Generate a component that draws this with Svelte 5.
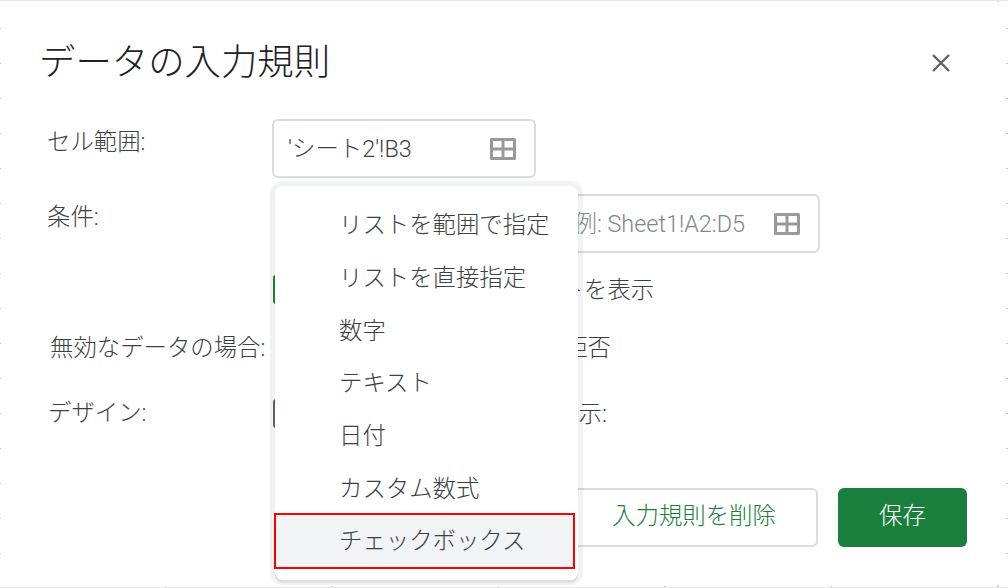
<script>
	const menuItems = [
		'リストを範囲で指定',
		'リストを直接指定',
		'数字',
		'テキスト',
		'日付',
		'カスタム数式',
		'チェックボックス'
	];
</script>

{#snippet gridIcon()}
	<svg class="grid-icon" viewBox="0 0 26 22" width="26" height="22" aria-hidden="true">
		<path fill="#999" fill-rule="evenodd" d="M1.500 0h23A1.500 1.500 0 0 1 26 1.500v19a1.500 1.500 0 0 1-1.500 1.500h-23A1.500 1.500 0 0 1 0 20.500v-19A1.500 1.500 0 0 1 1.500 0zM3 3v6.500h8.500V3zm11.500 0v6.500H23V3zM3 12.500V19h8.500v-6.500zm11.500 0V19H23v-6.500z" />
	</svg>
{/snippet}

<div class="page">
	<div class="dialog">
		<header>
			<h1>データの入力規則</h1>
			<button class="close" aria-label="閉じる">
				<svg viewBox="0 0 18 18" width="18" height="18">
					<path d="M1 1l16 16M17 1L1 17" stroke="#5f6368" stroke-width="2.400" fill="none" />
				</svg>
			</button>
		</header>

		<div class="form">
			<div class="row row-range">
				<div class="label">セル範囲:</div>
				<div class="input">
					<span class="value">'シート2'!B3</span>
					{@render gridIcon()}
				</div>
			</div>

			<div class="row row-criteria">
				<div class="label">条件:</div>
				<div class="criteria-input">
					<div class="input">
						<span class="value placeholder">例: Sheet1!A2:D5</span>
						{@render gridIcon()}
					</div>
				</div>
			</div>

			<div class="row row-check">
				<div class="label"></div>
				<span class="checkbox checked"></span>
				<span class="text">セルにプルダウン リストを表示</span>
			</div>

			<div class="row row-invalid">
				<div class="label">無効なデータの場合:</div>
				<span class="text reject">入力を拒否</span>
			</div>

			<div class="row row-design">
				<div class="label">デザイン:</div>
				<span class="checkbox"></span>
				<span class="text">検証ヘルプテキストを表示:</span>
			</div>
		</div>

		<footer>
			<button class="btn delete">入力規則を削除</button>
			<button class="btn save">保存</button>
		</footer>

		<div class="menu">
			{#each menuItems as item, i}
				<div class="menu-item" class:selected={i === menuItems.length - 1}>{item}</div>
			{/each}
		</div>
	</div>
</div>

<style>
	:global(body) {
		margin: 0;
		background: #fff;
	}

	.page {
		width: 1008px;
		height: 588px;
		box-sizing: border-box;
		padding: 1px 2px 2px 1px;
		background-color: #fff;
		background-image:
			linear-gradient(#e6e6e6, #e6e6e6),
			linear-gradient(#e6e6e6, #e6e6e6),
			repeating-linear-gradient(90deg, transparent 0 165px, #c8c8c8 165px 166.500px),
			repeating-linear-gradient(0deg, transparent 0 34px, #c8c8c8 34px 35px);
		background-size: 100% 1px, 100% 1px, 100% 100%, 100% 100%;
		background-position: 0 0, 0 100%, 0 0, 0 0;
		background-repeat: no-repeat;
		font-family: Roboto, 'Noto Sans CJK JP', sans-serif;
		color: #3c4043;
		font-size: 23.400px;
		font-weight: 300;
	}

	.dialog {
		position: relative;
		height: 100%;
		display: flex;
		flex-direction: column;
		background: #fff;
		border-radius: 12px;
	}

	header {
		display: flex;
		align-items: center;
		justify-content: space-between;
		padding: 39px 56px 0 38px;
		height: 46px;
	}

	h1 {
		margin: 0;
		font-size: 36.400px;
		font-weight: 300;
		line-height: 46px;
		color: #202124;
	}

	.close {
		display: flex;
		padding: 0;
		border: 0;
		background: none;
	}

	.form {
		display: flex;
		flex-direction: column;
		padding: 33px 0 0 47px;
	}

	.row {
		display: flex;
		align-items: center;
	}

	.label {
		flex: 0 0 224px;
		white-space: nowrap;
	}

	.input {
		box-sizing: border-box;
		display: flex;
		align-items: center;
		justify-content: space-between;
		width: 264px;
		height: 59px;
		padding: 0 18px 0 14px;
		border: 2px solid #dadce0;
		border-radius: 6px;
		white-space: nowrap;
	}

	.value {
		padding-bottom: 4px;
	}

	.row-range .label,
	.row-criteria .label {
		align-self: flex-start;
		flex-basis: 225px;
		margin-left: -1px;
		padding-top: 4px;
	}

	.row-criteria {
		margin-top: 16px;
	}

	.criteria-input {
		padding-left: 284px;
	}

	.placeholder {
		margin-left: 1.500px;
		color: #80868b;
	}

	.row-check {
		margin-top: 22px;
		height: 29px;
	}

	.row-invalid {
		margin-top: 29px;
		height: 29px;
	}

	.row-invalid .label {
		padding: 0 0 3px 2px;
		flex-basis: 222px;
	}

	.row-design {
		margin-top: 37px;
		height: 29px;
	}

	.row-design .label {
		padding-bottom: 5px;
	}

	.checkbox {
		box-sizing: border-box;
		flex: none;
		width: 29px;
		height: 29px;
		margin: 0 23px 0 1px;
		border: 3px solid #5f6368;
		border-radius: 3px;
	}

	.checkbox.checked {
		background: #188038;
		border-color: #188038;
	}

	.text {
		white-space: nowrap;
		padding-bottom: 3px;
	}

	.row-check .text {
		margin-left: -4px;
	}

	.row-design .text {
		margin-left: -3px;
	}

	.reject {
		margin-left: 222px;
	}

	footer {
		display: flex;
		justify-content: flex-end;
		gap: 20px;
		margin-top: auto;
		padding: 0 39px 39px 0;
	}

	.btn {
		box-sizing: border-box;
		height: 59px;
		padding: 0 0 7px;
		border-radius: 6px;
		font: inherit;
	}

	.delete {
		width: 248px;
		border: 2px solid #dadce0;
		background: #fff;
		color: #188038;
	}

	.save {
		width: 129px;
		border: 0;
		background: #1a7f3c;
		color: #fff;
	}

	.menu {
		position: absolute;
		left: 274px;
		top: 185px;
		box-sizing: border-box;
		width: 303px;
		height: 394px;
		padding: 13px 3px 0 0;
		background: #fff;
		border-radius: 8px;
		box-shadow: 0 0 1px 5px rgba(60, 64, 67, 0.07), 0 3px 1px rgba(60, 64, 67, 0.1);
	}

	.menu-item {
		box-sizing: border-box;
		height: 52.800px;
		padding-left: 64px;
		line-height: 52.800px;
		white-space: nowrap;
	}

	.menu-item.selected {
		height: 56px;
		margin: -2.300px 0 0 -1px;
		background: #f1f3f4;
		border: 2px solid #f00;
		padding-left: 63px;
		line-height: 52px;
	}
</style>
